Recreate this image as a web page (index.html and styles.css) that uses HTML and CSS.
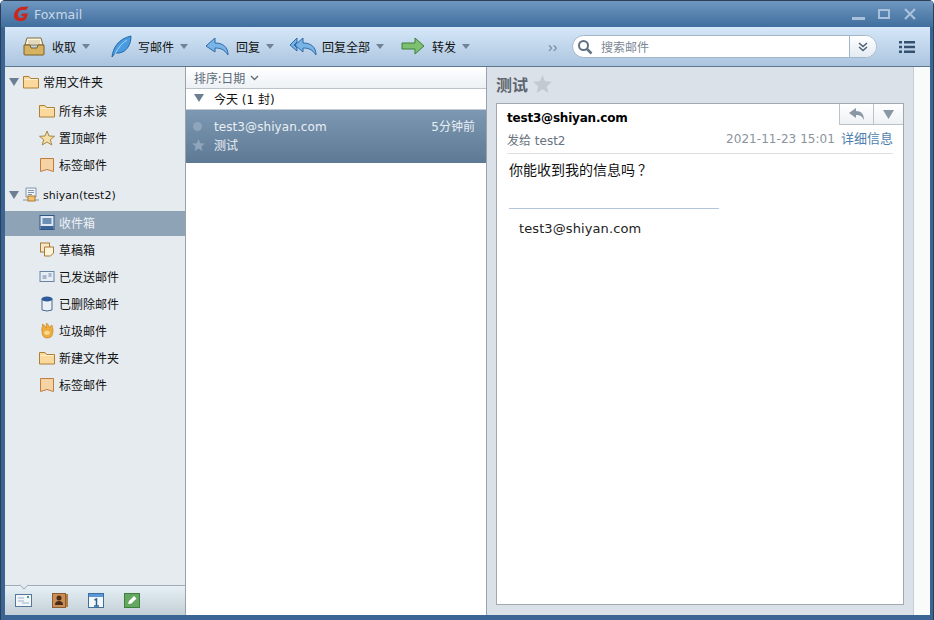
FILE: index.html
```html
<!DOCTYPE html>
<html lang="zh">
<head>
<meta charset="utf-8">
<title>Foxmail</title>
<link rel="stylesheet" href="styles.css">
</head>
<body>
<div class="window">
  <header class="titlebar">
    <svg class="logo" width="16" height="16" viewBox="0 0 16 16"><path d="M8 1 15.500 .5 13 4 9 4C6 4 5 7 5 9 5 11 6 12 8 12 10 12 10.500 11 10.800 10L8 10 9 7.500 15 7.500 13.500 12C12.500 14.500 10 15 7 15 3 15 .5 12.500 1 9 1.500 5 4.500 2 8 1Z" fill="#c8281e"/></svg>
    <span class="app-name">Foxmail</span>
    <div class="winctl">
      <svg width="14" height="14" viewBox="0 0 14 14"><rect x="1" y="10" width="13" height="3" fill="#a9c0da"/></svg>
      <svg width="14" height="14" viewBox="0 0 14 14"><rect x="2" y="3" width="10" height="8" fill="none" stroke="#a9c0da" stroke-width="2"/></svg>
      <svg width="14" height="14" viewBox="0 0 14 14"><path d="M2 2 12 12M12 2 2 12" stroke="#a9c0da" stroke-width="2.200"/></svg>
    </div>
  </header>
  <nav class="toolbar">
    <button class="tool t-recv">
      <svg width="22" height="20" viewBox="0 0 22 20"><path d="M4 1H18L20 8H2Z" fill="#fdf6e0" stroke="#7c6a3c"/><path d="M5 4H17M5 6H17" stroke="#c9bd96"/><path d="M1 8H7L8 11H14L15 8H21V17Q21 18 20 18H2Q1 18 1 17Z" fill="#d6b263" stroke="#7c5f24"/></svg>
      <span>收取</span><i class="caret"></i>
    </button>
    <button class="tool t-write">
      <svg width="22" height="24" viewBox="0 0 22 24"><path d="M2 22C3 13 8 4 21 1 21 9 17 17 9 18L5 18 2 22Z" fill="#4a9be0" stroke="#2468a8"/><path d="M5 19C8 13 12 8 17 5" stroke="#a8d4f6" fill="none"/></svg>
      <span>写邮件</span><i class="caret"></i>
    </button>
    <button class="tool t-reply">
      <svg width="24" height="20" viewBox="0 0 24 20"><path d="M10 1 1 9 10 15V11C15 11 19 12 23 18 23 10 18 6 10 6Z" fill="#79b4e6" stroke="#2f6aa8"/></svg>
      <span>回复</span><i class="caret"></i>
    </button>
    <button class="tool t-replyall">
      <svg width="28" height="20" viewBox="0 0 28 20"><path d="M8 1 1 8 8 14V11L5 8 8 5Z" fill="#79b4e6" stroke="#2f6aa8"/><path d="M14 1 6 8 14 15V11C19 11 23 12 27 18 27 10 22 6 14 6Z" fill="#79b4e6" stroke="#2f6aa8"/></svg>
      <span>回复全部</span><i class="caret"></i>
    </button>
    <button class="tool t-forward">
      <svg width="24" height="20" viewBox="0 0 24 20"><path d="M1 6H14V1L23 9 14 17V12H1Z" fill="#7cc070" stroke="#3d7f3a"/></svg>
      <span>转发</span><i class="caret"></i>
    </button>
    <span class="more">››</span>
    <div class="search">
      <svg width="16" height="16" viewBox="0 0 16 16"><circle cx="6.500" cy="6.500" r="4.500" fill="none" stroke="#5f7183" stroke-width="2"/><path d="M10 10 14.500 14.500" stroke="#5f7183" stroke-width="2.500"/></svg>
      <span class="search-text">搜索邮件</span>
      <span class="search-drop"><svg width="12" height="12" viewBox="0 0 12 12"><path d="M2 2 6 5.500 10 2M2 6 6 9.500 10 6" fill="none" stroke="#4e6073" stroke-width="1.500"/></svg></span>
    </div>
    <svg class="menu" width="16" height="12" viewBox="0 0 16 12"><path d="M0 0H3V2.500H0ZM5 0H16V2.500H5ZM0 4.700H3V7.200H0ZM5 4.700H16V7.200H5ZM0 9.400H3V11.900H0ZM5 9.400H16V11.900H5Z" fill="#33506f"/></svg>
  </nav>
  <div class="main">
    <aside class="sidebar">
      <div class="tree">
        <div class="node top first"><i class="tri"></i>
          <svg width="16" height="14" viewBox="0 0 16 14"><use href="#folder"/></svg><span>常用文件夹</span></div>
        <div class="node"><svg width="16" height="14" viewBox="0 0 16 14"><use href="#folder"/></svg><span>所有未读</span></div>
        <div class="node"><svg width="16" height="16" viewBox="0 0 16 16"><path d="M8 1 10 6 15.500 6.300 11.300 9.700 12.800 15 8 12 3.200 15 4.700 9.700 .5 6.300 6 6Z" fill="#f6dfa4" stroke="#a68648"/></svg><span>置顶邮件</span></div>
        <div class="node"><svg width="16" height="16" viewBox="0 0 16 16"><use href="#tag"/></svg><span>标签邮件</span></div>
        <div class="node top acct"><i class="tri"></i>
          <svg width="16" height="16" viewBox="0 0 16 16"><path d="M3 1H13V10H3Z" fill="#eef3f8" stroke="#8295ab"/><path d="M5 3.500H11M5 5.500H11M5 7.500H9" stroke="#8295ab"/><path d="M0 13H16" stroke="#8295ab"/><rect x="5" y="9" width="7" height="5" fill="#f3c270" stroke="#b07a2a"/></svg><span>shiyan(test2)</span></div>
        <div class="node selected"><svg width="15" height="15" viewBox="0 0 15 15"><rect x=".5" y=".5" width="14" height="14" fill="#dfe8f2" stroke="#2f5688"/><path d="M3 3H12V9H3Z" fill="#6d8fb6"/><rect x="1" y="11" width="13" height="3" fill="#3c6496"/></svg><span>收件箱</span></div>
        <div class="node"><svg width="15" height="15" viewBox="0 0 15 15"><rect x="1" y="1" width="9" height="9" fill="#f6e6c4" stroke="#a8793a"/><path d="M5 5H14V11L11 14H5Z" fill="#fbf3da" stroke="#a8793a"/></svg><span>草稿箱</span></div>
        <div class="node"><svg width="15" height="13" viewBox="0 0 15 13"><rect x=".5" y="1.500" width="14" height="10" fill="#e6edf5" stroke="#6b83a2"/><path d="M3 6H7M3 8H7M9 4H12M9 6H12" stroke="#6b83a2"/></svg><span>已发送邮件</span></div>
        <div class="node"><svg width="14" height="16" viewBox="0 0 14 16"><path d="M2 3V14Q7 16 12 14V3Z" fill="#eaf0f6" stroke="#4d6a91"/><ellipse cx="7" cy="3" rx="5.500" ry="2.500" fill="#2f5c98"/></svg><span>已删除邮件</span></div>
        <div class="node"><svg width="14" height="16" viewBox="0 0 14 16"><path d="M2 8C1 5 3 4 2.500 1 5 2 5 4 6 5 6 3 6.500 2 6.500 0 9 2 9 4 10 4.500 10 3 11 3 12 2 13 6 13.500 8 12.500 11 12 14 10 15 7 15 4 15 2 13 2 8Z" fill="#eeab3e" stroke="#c47e1f" stroke-width=".6"/><path d="M4 9Q7 6 10 9 10 12 7 12 4 12 4 9Z" fill="#fbd98a"/></svg><span>垃圾邮件</span></div>
        <div class="node"><svg width="16" height="14" viewBox="0 0 16 14"><use href="#folder"/></svg><span>新建文件夹</span></div>
        <div class="node"><svg width="16" height="16" viewBox="0 0 16 16"><use href="#tag"/></svg><span>标签邮件</span></div>
      </div>
      <div class="switcher">
        <i class="notch"></i>
        <svg width="17" height="14" viewBox="0 0 17 14"><rect x=".5" y=".5" width="16" height="12" fill="#f2f6fa" stroke="#587698"/><path d="M3 4H9M3 7H9M7 9H14" stroke="#9ab0c8"/><rect x="12" y="2" width="2" height="2" fill="#4fa070"/></svg>
        <svg width="16" height="15" viewBox="0 0 16 15"><rect x=".5" y=".5" width="13" height="14" fill="#c98e55" stroke="#8c5c30"/><circle cx="7" cy="5" r="2.500" fill="#4a2c18"/><path d="M3 12Q3 8 7 8 11 8 11 12Z" fill="#4a2c18"/><rect x="14" y="1" width="2" height="13" fill="#b07c46"/></svg>
        <svg width="16" height="15" viewBox="0 0 16 15"><rect x=".5" y=".5" width="15" height="14" fill="#f4f8fc" stroke="#3f6f9f"/><rect x="1" y="1" width="14" height="3" fill="#5a98d8"/><path d="M6.500 7 8.500 6V13M6 13H11" stroke="#2f6090" stroke-width="1.500" fill="none"/></svg>
        <svg width="16" height="15" viewBox="0 0 16 15"><rect x=".5" y=".5" width="15" height="14" fill="#63a85f" stroke="#3f7f3d"/><path d="M4 11 5 8 10 3 12.500 5.500 7.500 10.500Z" fill="#fff"/></svg>
      </div>
    </aside>
    <section class="list">
      <div class="sort"><span>排序:日期</span><svg width="9" height="6" viewBox="0 0 9 6"><path d="M1 1 4.500 4.500 8 1" fill="none" stroke="#5d6b78" stroke-width="1.300"/></svg></div>
      <div class="group"><i class="tri"></i><span>今天 (1 封)</span></div>
      <div class="mail">
        <div class="mail-row">
          <i class="dot"></i><span class="from">test3@shiyan.com</span><span class="time">5分钟前</span>
        </div>
        <div class="mail-row sub">
          <svg width="13" height="12" viewBox="0 0 16 15"><path d="M8 0 10.200 5.200 16 5.700 11.600 9.400 13 15 8 12 3 15 4.400 9.400 0 5.700 5.800 5.200Z" fill="#8fa5bc"/></svg><span class="subject">测试</span>
        </div>
      </div>
    </section>
    <section class="reader">
      <div class="reader-pane">
        <h1 class="title">测试<svg width="19" height="18" viewBox="0 0 16 15"><path d="M8 0 10.200 5.200 16 5.700 11.600 9.400 13 15 8 12 3 15 4.400 9.400 0 5.700 5.800 5.200Z" fill="#c2c9d3"/></svg></h1>
        <article class="card">
          <div class="actions">
            <span class="act"><svg width="16" height="13" viewBox="0 0 16 13"><path d="M7 0 0 5 7 10V7C11 7 13 8 15 12 15 6 12 3 7 3Z" fill="#8a97a5"/></svg></span>
            <span class="act"><svg width="11" height="9" viewBox="0 0 11 9"><path d="M0 0H11L5.500 9Z" fill="#8a97a5"/></svg></span>
          </div>
          <div class="head">
            <div class="sender">test3@shiyan.com</div>
            <div class="meta"><span class="to">发给 test2</span><span class="date">2021-11-23 15:01</span><span class="detail">详细信息</span></div>
          </div>
          <div class="body">
            <p class="msg">你能收到我的信息吗<span class="qm">？</span></p>
            <div class="sig-line"></div>
            <p class="sig">test3@shiyan.com</p>
          </div>
        </article>
      </div>
      <div class="scroll"></div>
    </section>
  </div>
</div>
<svg class="defs" width="0" height="0">
  <defs>
    <g id="folder"><path d="M.5 13V1.500H6L7.500 3.500H15.500V13Z" fill="#fbd99c" stroke="#ae8034"/><path d="M1.500 4.500H14.500" stroke="#fff0cf"/></g>
    <g id="tag"><path d="M1.500 1.500H14.500V14.500L8 12.500 1.500 14.500Z" fill="#f5d3a4" stroke="#c07d3e"/></g>
  </defs>
</svg>
</body>
</html>
```
FILE: styles.css
```css
* { box-sizing: border-box; }
html, body { margin: 0; height: 100%; overflow: hidden; background: #fff; }
body { font: 12px "Liberation Sans", "Noto Sans CJK SC", sans-serif; color: #111; }
.defs { position: absolute; }
i { display: block; font-style: normal; }

.window {
  width: 934px; height: 620px; display: flex; flex-direction: column;
  background: #3a6493; border: 1px solid #2b3f57; border-bottom: 0;
  border-radius: 5px 5px 0 0; padding: 0 3px 5px 4px;
}
.titlebar {
  height: 26px; margin: 0 -3px 0 -4px; padding: 0 16px 0 12px; flex: none;
  display: flex; align-items: center;
  background: linear-gradient(#6f97c0, #42709f 95%);
}
.logo { margin-right: 5px; }
.app-name { font: 12.500px "DejaVu Sans", sans-serif; color: #c9d8e8; }
.winctl { margin-left: auto; display: flex; gap: 12px; }

.toolbar {
  height: 40px; flex: none; display: flex; align-items: center; padding: 0 0 0 18px;
  background: linear-gradient(#d6e8f9, #abc4de); border-bottom: 1px solid #5e7791;
}
.tool {
  display: flex; align-items: center; border: 0; background: none; padding: 0;
  font: 12px "Noto Sans CJK SC", sans-serif; color: #111;
}
.tool span { white-space: nowrap; }
.t-recv svg { margin-right: 7px; }
.t-recv { margin-right: 20px; }
.t-write svg { margin-right: 6px; }
.t-write { margin-right: 17px; }
.t-reply svg { margin-right: 7px; }
.t-reply { margin-right: 15px; }
.t-replyall svg { margin-right: 5px; }
.t-replyall { margin-right: 17px; }
.t-forward svg { margin-right: 7px; }
.caret { width: 0; height: 0; margin-left: 6px; border: 4px solid transparent; border-top: 5px solid #6f8296; border-bottom: 0; }
.more { margin-left: 78px; color: #6f8296; font-size: 14px; width: 24px; }
.search {
  width: 305px; height: 23px; display: flex; align-items: center;
  background: #fff; border: 1px solid #a3b6c8; border-radius: 12px; padding-left: 4px; overflow: hidden;
}
.search-text { margin-left: 8px; color: #7b8794; font: 12px "Noto Sans CJK SC", sans-serif; }
.search-drop {
  margin-left: auto; width: 27px; height: 100%; display: flex; align-items: center; justify-content: center;
  border-left: 1px solid #a3b6c8; background: linear-gradient(#fff, #e3ebf3);
}
.menu { margin-left: 22px; }

.main { flex: 1; display: flex; min-height: 0; background: #fff; }
.sidebar {
  width: 181px; flex: none; display: flex; flex-direction: column;
  background: #e6ebf0; border-right: 1px solid #9aa3ac;
}
.tree { flex: 1; }
.node {
  height: 27px; display: flex; align-items: center; padding-left: 34px; gap: 4px;
  font: 12px "Noto Sans CJK SC", sans-serif; color: #111;
}
.node svg { width: 16px; flex: none; }
.node.top { padding-left: 4px; gap: 4px; }
.node.first { height: 29px; margin-bottom: 1px; }
.node.acct { height: 31px; padding-bottom: 1px; margin-top: 2px; font: 11px "DejaVu Sans", "Noto Sans CJK SC", sans-serif; }
.node.selected { height: 25px; padding-bottom: 2px; background: #8fa3b6; color: #edf2f6; }
.tri { width: 0; height: 0; border: 5px solid transparent; border-top: 8px solid #6c7f92; border-bottom: 0; }
.switcher {
  height: 30px; flex: none; position: relative; display: flex; align-items: center;
  gap: 20px; padding: 0 0 0 10px;
  background: linear-gradient(#e6f0f6, #c3ced6); border-top: 1px solid #a0abb5;
}
.switcher svg { flex: none; }
.notch {
  position: absolute; left: 15px; top: -5px; width: 8px; height: 8px;
  background: #e6ebf0; border-right: 1px solid #a0abb5; border-bottom: 1px solid #a0abb5;
  transform: rotate(45deg) scale(.8);
}

.list { width: 301px; flex: none; display: flex; flex-direction: column; border-right: 1px solid #9aa3ac; background: #fff; }
.sort {
  height: 22px; flex: none; display: flex; align-items: center; gap: 5px; padding-left: 8px;
  background: linear-gradient(#fff, #edf1f5); border-bottom: 1px solid #bcc3ca;
  font: 12px "Noto Sans CJK SC", sans-serif; color: #5d6b78;
}
.group {
  height: 21px; flex: none; display: flex; align-items: center; padding: 0 0 2px 8px;
  border-bottom: 1px solid #c4cad0; font: 12px "DejaVu Sans", "Noto Sans CJK SC", sans-serif;
}
.group span { margin-left: 10px; }
.mail { height: 53px; flex: none; padding: 7px 11px 0 6px; background: linear-gradient(#7d98b2, #5e7993); color: #e9eff5; }
.mail-row { display: flex; align-items: center; height: 18px; }
.dot { width: 9px; height: 9px; margin: 0 12px 0 1px; border-radius: 50%; background: #8fa5bc; }
.from { font: 12px "DejaVu Sans", sans-serif; letter-spacing: .08px; margin-top: 2px; }
.time { margin: 0 0 2px auto; font: 12px "DejaVu Sans", "Noto Sans CJK SC", sans-serif; }
.sub svg { margin: 2px 9px 0 0; }
.subject { font: 12px "Noto Sans CJK SC", sans-serif; }

.reader { flex: 1; display: flex; min-width: 0; }
.reader-pane { flex: 1; display: flex; flex-direction: column; padding: 0 9px 10px 9px; background: #dbe1e8; border-right: 1px solid #c5ccd3; }
.title {
  height: 36px; margin: 0; padding-bottom: 3px; flex: none; display: flex; align-items: center; gap: 5px;
  font: bold 16px "Noto Sans CJK SC", sans-serif; color: #5d6670;
}
.card { flex: 1; position: relative; background: #fff; border: 1px solid #a2a8ad; }
.actions { position: absolute; right: 0; top: 0; display: flex; height: 21px; border-left: 1px solid #bcc3ca; border-bottom: 1px solid #bcc3ca; background: linear-gradient(#fff, #eef1f4); }
.act { width: 33px; display: flex; align-items: center; justify-content: center; }
.act + .act { width: 30px; border-left: 1px solid #bcc3ca; }
.head { margin: 0 10px; height: 50px; padding-top: 7px; border-bottom: 1px solid #dcdfe2; }
.sender { font: bold 12px "DejaVu Sans", sans-serif; color: #000; height: 19px; letter-spacing: -.2px; }
.meta { display: flex; align-items: center; height: 18px; font: 12px "DejaVu Sans", "Noto Sans CJK SC", sans-serif; color: #68737e; }
.date { margin-left: auto; color: #8b939b; letter-spacing: .05px; }
.detail { margin: 0 0 2px 6px; color: #4f7fae; font: 13px/18px "Noto Sans CJK SC", sans-serif; }
.body { padding: 0 12px; }
.msg { margin: 5px 0 0; height: 49px; font: 14px/20px "Noto Sans CJK SC", sans-serif; color: #111; }
.qm { font-family: "Noto Sans CJK TC", sans-serif; margin-left: 3px; }
.sig-line { width: 210px; height: 1px; background: #b4c6de; }
.sig { margin: 12px 0 0 10px; font: 13px "DejaVu Sans", sans-serif; color: #222; letter-spacing: .1px; }
.scroll { width: 16px; flex: none; background: #f9fbfb; }
```
